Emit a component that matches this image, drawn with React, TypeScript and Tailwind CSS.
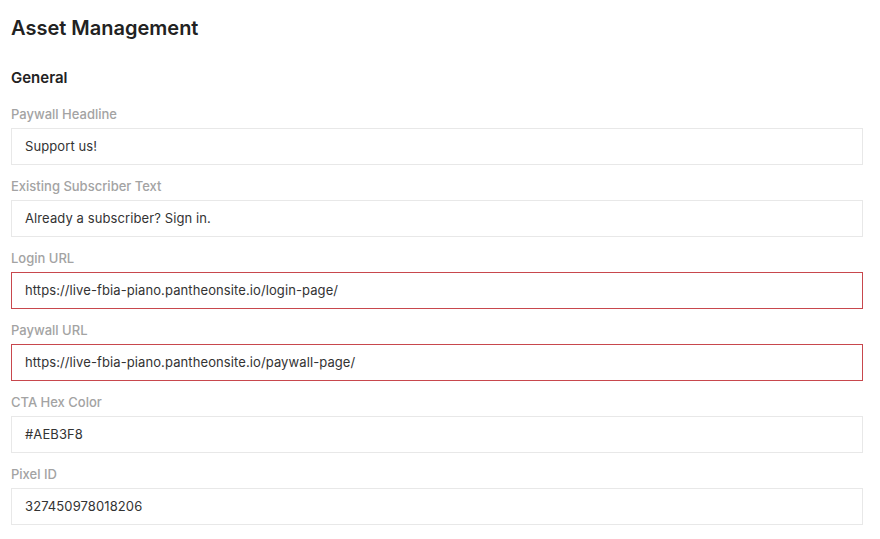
const fields = [
  { label: "Paywall Headline", value: "Support us!", error: false },
  { label: "Existing Subscriber Text", value: "Already a subscriber? Sign in.", error: false },
  { label: "Login URL", value: "https://live-fbia-piano.pantheonsite.io/login-page/", error: true },
  { label: "Paywall URL", value: "https://live-fbia-piano.pantheonsite.io/paywall-page/", error: true },
  { label: "CTA Hex Color", value: "#AEB3F8", error: false },
  { label: "Pixel ID", value: "327450978018206", error: false },
];

export default function App() {
  return (
    <div className="min-h-screen bg-white pl-[11px] pr-[17px] pt-[15px] font-['Inter','Liberation_Sans',sans-serif] text-[#1d1d1f]">
      <h1 className="text-[20px] font-semibold leading-[26px] tracking-[0px] text-[#222]">Asset Management</h1>
      <h2 className="mt-[27px] text-[15px] font-semibold leading-5 text-[#222]">General</h2>
      <div className="mt-[18px] flex flex-col gap-[13px]">
        {fields.map((f) => (
          <div key={f.label} className="flex flex-col gap-[6px]">
            <label className="text-[13px] font-medium leading-4 text-[#a3a3a3]">{f.label}</label>
            <div
              className={
                f.error
                  ? "flex h-[37px] items-center border border-[#c8474d] bg-white px-[13px] text-[13px] tracking-[0.1px] text-[#333]"
                  : "flex h-[37px] items-center border border-[#e8e8e8] bg-white px-[13px] text-[13px] tracking-[0.1px] text-[#333]"
              }
            >
              {f.value}
            </div>
          </div>
        ))}
      </div>
    </div>
  );
}
